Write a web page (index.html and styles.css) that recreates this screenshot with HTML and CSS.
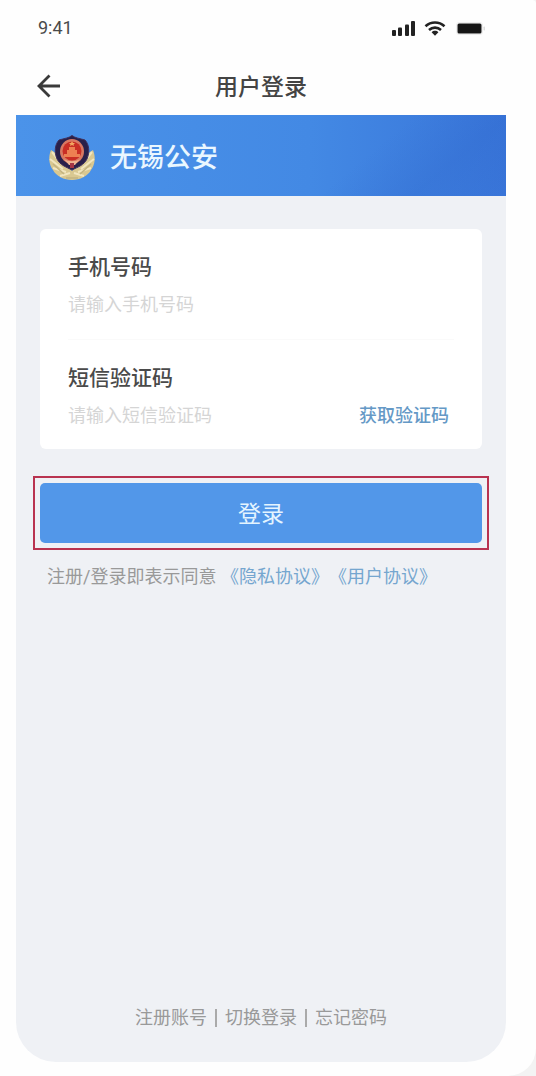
FILE: index.html
```html
<!DOCTYPE html>
<html lang="zh-CN">
<head>
<meta charset="utf-8">
<meta name="viewport" content="width=device-width, initial-scale=1">
<title>用户登录</title>
<link rel="stylesheet" href="styles.css">
</head>
<body>
<div class="phone">
  <div class="status">
    <span class="time">9:41</span>
    <div class="status-icons">
      <svg width="24" height="15" viewBox="0 0 24 15" fill="#222" aria-hidden="true">
        <rect x="0" y="9" width="4" height="6" rx="1"/><rect x="6" y="6.500" width="4" height="8.500" rx="1"/><rect x="13" y="3.500" width="4" height="11.500" rx="1"/><rect x="19" y="0" width="4" height="15" rx="1"/>
      </svg>
      <svg width="22" height="15" viewBox="0 0 22 15" fill="none" stroke="#222" stroke-width="2.600" aria-hidden="true">
        <path d="M1.500 5.200C7 .2 15 .2 20.500 5.200"/><path d="M5 9C8.500 5.800 13.500 5.800 17 9"/><path d="M7.600 11.200C9.500 9.400 12.500 9.400 14.400 11.200L11 14.800Z" fill="#222" stroke="none"/>
      </svg>
      <svg class="battery" width="30" height="15" viewBox="0 0 30 15" aria-hidden="true">
        <rect x=".5" y="1.500" width="26" height="12" rx="2.500" fill="none" stroke="#eee"/><rect x="1.500" y="2.500" width="24" height="10" rx="1.500" fill="#161616"/><rect x="27.500" y="5.500" width="1.500" height="4" rx=".7" fill="#ddd"/>
      </svg>
    </div>
  </div>
  <header class="nav">
    <button class="back" type="button" aria-label="返回">
      <svg width="24" height="24" viewBox="0 0 24 24" fill="none" stroke="#3a3a3a" stroke-width="2.800" aria-hidden="true"><path d="M12.500 1.500 2 12 12.500 22.500M2 12H23"/></svg>
    </button>
    <h1 class="title">用户登录</h1>
  </header>
  <main class="screen">
    <div class="banner">
      <svg width="48" height="48" viewBox="0 0 48 48" aria-hidden="true">
        <path d="M3 16C0 23 1 31 5 36C8 42 16 46 24 46C32 46 40 42 43 36C47 31 48 23 45 16L36 22L24 37L12 22Z" fill="#d9c891"/>
        <path d="M4 18L13 29M2 25L15 35M5 34L18 38M44 18L35 29M46 25L33 35M43 34L30 38M12 42L22 39M36 42L26 39" stroke="#f2e6bf" stroke-width="2" fill="none"/>
        <path d="M5 30L16 40M43 30L32 40M18 44H30" stroke="#c4b481" stroke-width="1.500"/>
        <path d="M24 1.500C27 4 32 4.500 37 6C41 10 42 18 39 25C36 31 30 33 24 36C18 33 12 31 9 25C6 18 7 10 11 6C16 4.500 21 4 24 1.500Z" fill="#29204a" stroke="#40305c"/>
        <ellipse cx="24" cy="17.500" rx="12" ry="12.500" fill="#d87862"/>
        <circle cx="24" cy="17" r="9.500" fill="#c92e25"/>
        <path d="M16 20H19V16H21V13H27V16H29V20H32V23H16Z" fill="#ed8052"/>
        <path d="M24 7L25 9H27L25.500 10.500L26 12L24 11L22 12L22.500 10.500L21 9H23Z" fill="#f2a661"/>
        <path d="M16 25C20 28 28 28 32 25L27 31H21Z" fill="#efb391"/>
        <path d="M22 29H26V34H22Z" fill="#a43545"/>
      </svg>
      <span>无锡公安</span>
    </div>
    <form class="form">
      <div class="card">
        <div class="field">
          <label for="phone">手机号码</label>
          <input id="phone" type="tel" placeholder="请输入手机号码">
        </div>
        <div class="field">
          <label for="code">短信验证码</label>
          <div class="code-row">
            <input id="code" type="text" inputmode="numeric" placeholder="请输入短信验证码">
            <button class="get-code" type="button">获取验证码</button>
          </div>
        </div>
      </div>
      <div class="highlight"><button class="login" type="submit">登录</button></div>
      <p class="terms">注册/登录即表示同意 <a href="#privacy">《隐私协议》</a><a href="#terms">《用户协议》</a></p>
    </form>
    <footer class="links"><a href="#register">注册账号</a><span class="divider"></span><a href="#switch">切换登录</a><span class="divider"></span><a href="#forgot">忘记密码</a></footer>
  </main>
</div>
</body>
</html>
```
FILE: styles.css
```css
* { box-sizing: border-box; }
body {
  margin: 0;
  background: #f3f3f3;
  color: #4a4a4a;
  font: 18px/24px Roboto, "Noto Sans CJK SC", sans-serif;
  text-spacing-trim: space-all;
}
button, input { font: inherit; border: 0; padding: 0; background: none; }
a { color: inherit; text-decoration: none; }
.phone {
  display: flex;
  flex-direction: column;
  min-height: 100vh;
  padding: 0 30px 14px 16px;
  background: #fefefe;
  border-radius: 0 4px 28px 0;
}
.status {
  display: flex;
  align-items: center;
  justify-content: space-between;
  height: 56px;
  padding: 0 20px 0 22px;
}
.status-icons { display: flex; align-items: center; gap: 8px; }
.battery { margin-left: 2px; }
.nav {
  display: grid;
  grid-template-columns: 24px 1fr 24px;
  align-items: center;
  height: 59px;
  padding: 0 21px;
}
.back { display: flex; cursor: pointer; }
.title {
  margin: 0;
  padding-top: 4px;
  color: #444;
  font-size: 23px;
  line-height: 32px;
  font-weight: 500;
  text-align: center;
}
.screen {
  flex: 1;
  display: flex;
  flex-direction: column;
  background: #eff1f5;
  border-radius: 0 0 40px 40px;
}
.banner {
  display: flex;
  align-items: center;
  gap: 14px;
  height: 81px;
  padding: 4px 32px 0;
  color: #eaf7ff;
  font-size: 27px;
  line-height: 40px;
  font-weight: 500;
  background:
    linear-gradient(140deg, transparent 68%, #2f68cc44 84%, #2f68cc11 100%),
    linear-gradient(90deg, #4b93e9, #4389e4 60%, #3975d9);
}
.form { padding: 33px 18px 0; }
.card {
  margin: 0 6px;
  padding: 0 28px;
  background: #fff;
  border-radius: 6px;
}
.field { height: 110px; padding-top: 22px; }
.field + .field { border-top: 1px solid #fafafa; }
.field label { display: block; font-size: 21px; line-height: 32px; font-weight: 500; }
.field input {
  display: block;
  width: 100%;
  min-width: 0;
  height: 24px;
  margin-top: 10px;
  outline: 0;
}
.field input::placeholder { color: #d5d5d5; opacity: 1; }
.code-row { display: flex; align-items: center; gap: 12px; padding-right: 5px; }
.get-code { margin-top: 10px; color: #6599c6; font-weight: 500; white-space: nowrap; cursor: pointer; }
.highlight { margin: 27px -1px 0; padding: 5px; border: 2px solid #b93350; }
.login {
  display: block;
  width: 100%;
  height: 60px;
  padding-top: 4px;
  border-radius: 5px;
  background: #5297e9;
  color: #e4f4ff;
  font-size: 23px;
  cursor: pointer;
}
.terms { margin: 15px 0 0 13px; color: #999; }
.terms a { color: #75a6cf; }
.links {
  display: flex;
  align-items: center;
  justify-content: center;
  gap: 8px;
  margin-top: auto;
  padding-bottom: 32px;
  color: #999;
}
.divider { width: 2px; height: 18px; background: #aaa; }
```
